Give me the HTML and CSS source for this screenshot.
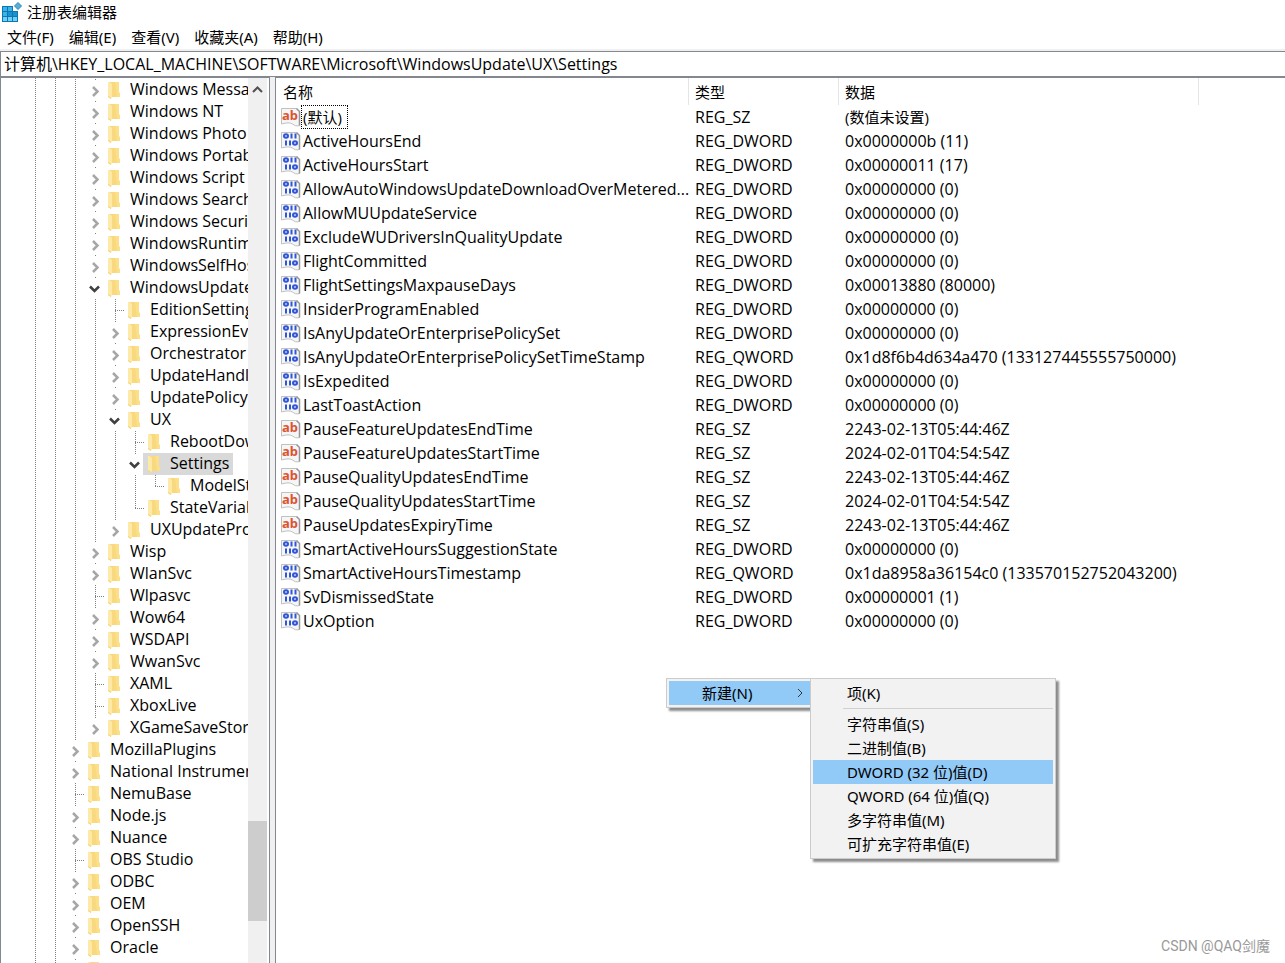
FILE: index.html
```html
<!DOCTYPE html>
<html lang="zh-CN">
<head>
<meta charset="utf-8">
<title>注册表编辑器</title>
<link rel="stylesheet" href="styles.css">
</head>
<body>
<svg class="sprite" aria-hidden="true">
  <symbol id="folder" viewBox="0 0 12 22">
    <path d="M2 3h9v10.500l1 .500v4H2z" fill="#f8d97f"/>
    <path d="M7 3h4v10.500l1 .500v4H9z" fill="#fddf87"/>
    <path d="M0 3h1.500L4 5v13l-1 2-3-2z" fill="#ffe9a6"/>
    <path d="M0 17l3 2v1l-3-2z" fill="#f3cf6c"/>
  </symbol>
  <symbol id="closed" viewBox="0 0 18 22"><path d="M8 8l4.500 4.500L8 17" fill="none" stroke="#a6a6a6" stroke-width="2.500"/></symbol>
  <symbol id="open" viewBox="0 0 18 22"><path d="M5 9.500l4.500 4.500L14 9.500" fill="none" stroke="#404040" stroke-width="2.500"/></symbol>
  <symbol id="sz" viewBox="0 0 20 20">
    <path d="M.5 1.500h15l3 3v14c-3 1-5 0-7-1.500s-6-1.500-11 0z" fill="#f6f6f6" stroke="#c0c0c0"/>
    <path d="M15.500 1.500l3 3v14" fill="none" stroke="#969696" stroke-width="1.500"/>
    <text x="1" y="13" class="glyph">ab</text>
  </symbol>
  <symbol id="bin" viewBox="0 0 20 20">
    <path d="M.5 1.500h15l3 3v14c-3 1-5 0-7-1.500s-6-1.500-11 0z" fill="#f6f6f6" stroke="#c0c0c0"/>
    <path d="M15.500 1.500l3 3v14" fill="none" stroke="#969696" stroke-width="1.500"/>
    <g fill="none" stroke="#2f55d8" stroke-width="2">
      <ellipse cx="5" cy="5" rx="2" ry="1.800"/><ellipse cx="14" cy="12" rx="2" ry="1.800"/>
      <path d="M10.500 2.500v5M14.500 2.500v5M5 9.500v5M9 9.500v5"/>
    </g>
  </symbol>
</svg>

<header class="title-bar">
  <svg class="app-icon" viewBox="0 0 20 20" aria-hidden="true">
    <path d="M0 4h11v5h5v11H0z" fill="#0f76b4"/>
    <path d="M1 5h4v4H1zM6 5h4v4H6zM1 10h4v4H1z" fill="#38b4e6"/>
    <path d="M6 10h4v4H6zM11 10h4v4h-4z" fill="#1c92cc"/>
    <path d="M1 15h4v4H1zM6 15h4v4H6zM11 15h4v4h-4z" fill="#6fd0f4"/>
    <path d="M16 .5l3.500 3.500L16 7.500 12.500 4z" fill="#58aed8" stroke="#2a86bb"/>
  </svg>
  <h1>注册表编辑器</h1>
</header>
<nav class="menu-bar">
  <button>文件(F)</button><button>编辑(E)</button><button>查看(V)</button><button>收藏夹(A)</button><button>帮助(H)</button>
</nav>
<input class="address" type="text" aria-label="地址" value="计算机\HKEY_LOCAL_MACHINE\SOFTWARE\Microsoft\WindowsUpdate\UX\Settings">

<main class="panes">
  <section class="tree-pane">
    <div class="tree">
      <ul>
        <li>
          <ul aria-label="Microsoft">
            <li><div class="row"><button class="toggle" aria-label="展开"><svg><use href="#closed"/></svg></button><span class="key"><svg><use href="#folder"/></svg>Windows Messaging Subsystem</span></div></li>
            <li><div class="row"><button class="toggle" aria-label="展开"><svg><use href="#closed"/></svg></button><span class="key"><svg><use href="#folder"/></svg>Windows NT</span></div></li>
            <li><div class="row"><button class="toggle" aria-label="展开"><svg><use href="#closed"/></svg></button><span class="key"><svg><use href="#folder"/></svg>Windows Photo Viewer</span></div></li>
            <li><div class="row"><button class="toggle" aria-label="展开"><svg><use href="#closed"/></svg></button><span class="key"><svg><use href="#folder"/></svg>Windows Portable Devices</span></div></li>
            <li><div class="row"><button class="toggle" aria-label="展开"><svg><use href="#closed"/></svg></button><span class="key"><svg><use href="#folder"/></svg>Windows Script Host</span></div></li>
            <li><div class="row"><button class="toggle" aria-label="展开"><svg><use href="#closed"/></svg></button><span class="key"><svg><use href="#folder"/></svg>Windows Search</span></div></li>
            <li><div class="row"><button class="toggle" aria-label="展开"><svg><use href="#closed"/></svg></button><span class="key"><svg><use href="#folder"/></svg>Windows Security Health</span></div></li>
            <li><div class="row"><button class="toggle" aria-label="展开"><svg><use href="#closed"/></svg></button><span class="key"><svg><use href="#folder"/></svg>WindowsRuntime</span></div></li>
            <li><div class="row"><button class="toggle" aria-label="展开"><svg><use href="#closed"/></svg></button><span class="key"><svg><use href="#folder"/></svg>WindowsSelfHost</span></div></li>
            <li><div class="row"><button class="toggle" aria-label="折叠"><svg><use href="#open"/></svg></button><span class="key"><svg><use href="#folder"/></svg>WindowsUpdate</span></div>
              <ul>
                <li><div class="row leaf"><span class="key"><svg><use href="#folder"/></svg>EditionSettings</span></div></li>
                <li><div class="row"><button class="toggle" aria-label="展开"><svg><use href="#closed"/></svg></button><span class="key"><svg><use href="#folder"/></svg>ExpressionEvaluators</span></div></li>
                <li><div class="row"><button class="toggle" aria-label="展开"><svg><use href="#closed"/></svg></button><span class="key"><svg><use href="#folder"/></svg>Orchestrator</span></div></li>
                <li><div class="row"><button class="toggle" aria-label="展开"><svg><use href="#closed"/></svg></button><span class="key"><svg><use href="#folder"/></svg>UpdateHandlers</span></div></li>
                <li><div class="row"><button class="toggle" aria-label="展开"><svg><use href="#closed"/></svg></button><span class="key"><svg><use href="#folder"/></svg>UpdatePolicy</span></div></li>
                <li><div class="row"><button class="toggle" aria-label="折叠"><svg><use href="#open"/></svg></button><span class="key"><svg><use href="#folder"/></svg>UX</span></div>
                  <ul>
                    <li><div class="row leaf"><span class="key"><svg><use href="#folder"/></svg>RebootDowntime</span></div></li>
                    <li><div class="row"><button class="toggle" aria-label="折叠"><svg><use href="#open"/></svg></button><span class="key selected"><svg><use href="#folder"/></svg>Settings</span></div>
                      <ul>
                        <li><div class="row leaf"><span class="key"><svg><use href="#folder"/></svg>ModelState</span></div></li>
                      </ul>
                    </li>
                    <li><div class="row leaf"><span class="key"><svg><use href="#folder"/></svg>StateVariables</span></div></li>
                  </ul>
                </li>
                <li><div class="row"><button class="toggle" aria-label="展开"><svg><use href="#closed"/></svg></button><span class="key"><svg><use href="#folder"/></svg>UXUpdateProvider</span></div></li>
              </ul>
            </li>
            <li><div class="row"><button class="toggle" aria-label="展开"><svg><use href="#closed"/></svg></button><span class="key"><svg><use href="#folder"/></svg>Wisp</span></div></li>
            <li><div class="row"><button class="toggle" aria-label="展开"><svg><use href="#closed"/></svg></button><span class="key"><svg><use href="#folder"/></svg>WlanSvc</span></div></li>
            <li><div class="row leaf"><span class="key"><svg><use href="#folder"/></svg>Wlpasvc</span></div></li>
            <li><div class="row"><button class="toggle" aria-label="展开"><svg><use href="#closed"/></svg></button><span class="key"><svg><use href="#folder"/></svg>Wow64</span></div></li>
            <li><div class="row"><button class="toggle" aria-label="展开"><svg><use href="#closed"/></svg></button><span class="key"><svg><use href="#folder"/></svg>WSDAPI</span></div></li>
            <li><div class="row"><button class="toggle" aria-label="展开"><svg><use href="#closed"/></svg></button><span class="key"><svg><use href="#folder"/></svg>WwanSvc</span></div></li>
            <li><div class="row leaf"><span class="key"><svg><use href="#folder"/></svg>XAML</span></div></li>
            <li><div class="row leaf"><span class="key"><svg><use href="#folder"/></svg>XboxLive</span></div></li>
            <li><div class="row"><button class="toggle" aria-label="展开"><svg><use href="#closed"/></svg></button><span class="key"><svg><use href="#folder"/></svg>XGameSaveStorage</span></div></li>
          </ul>
        </li>
        <li><div class="row"><button class="toggle" aria-label="展开"><svg><use href="#closed"/></svg></button><span class="key"><svg><use href="#folder"/></svg>MozillaPlugins</span></div></li>
        <li><div class="row"><button class="toggle" aria-label="展开"><svg><use href="#closed"/></svg></button><span class="key"><svg><use href="#folder"/></svg>National Instruments</span></div></li>
        <li><div class="row leaf"><span class="key"><svg><use href="#folder"/></svg>NemuBase</span></div></li>
        <li><div class="row"><button class="toggle" aria-label="展开"><svg><use href="#closed"/></svg></button><span class="key"><svg><use href="#folder"/></svg>Node.js</span></div></li>
        <li><div class="row"><button class="toggle" aria-label="展开"><svg><use href="#closed"/></svg></button><span class="key"><svg><use href="#folder"/></svg>Nuance</span></div></li>
        <li><div class="row leaf"><span class="key"><svg><use href="#folder"/></svg>OBS Studio</span></div></li>
        <li><div class="row"><button class="toggle" aria-label="展开"><svg><use href="#closed"/></svg></button><span class="key"><svg><use href="#folder"/></svg>ODBC</span></div></li>
        <li><div class="row"><button class="toggle" aria-label="展开"><svg><use href="#closed"/></svg></button><span class="key"><svg><use href="#folder"/></svg>OEM</span></div></li>
        <li><div class="row"><button class="toggle" aria-label="展开"><svg><use href="#closed"/></svg></button><span class="key"><svg><use href="#folder"/></svg>OpenSSH</span></div></li>
        <li><div class="row"><button class="toggle" aria-label="展开"><svg><use href="#closed"/></svg></button><span class="key"><svg><use href="#folder"/></svg>Oracle</span></div></li>
        <li><div class="row"><button class="toggle" aria-label="展开"><svg><use href="#closed"/></svg></button><span class="key"><svg><use href="#folder"/></svg></span></div></li>
      </ul>
    </div>
    <div class="scrollbar">
      <button class="scroll-up" aria-label="向上滚动"><svg viewBox="0 0 11 11"><path d="M1 8l4.500-4.500L10 8" fill="none" stroke="#505050" stroke-width="2"/></svg></button>
      <div class="track"><div class="thumb"></div></div>
    </div>
  </section>

  <section class="list-pane">
    <table>
      <colgroup><col class="col-name"><col class="col-type"><col class="col-data"><col></colgroup>
      <thead><tr><th>名称</th><th>类型</th><th>数据</th><td></td></tr></thead>
      <tbody>
        <tr><td><span class="value"><svg><use href="#sz"/></svg><span class="name focused">(默认)</span></span></td><td>REG_SZ</td><td class="unset">(数值未设置)</td></tr>
        <tr><td><span class="value"><svg><use href="#bin"/></svg><span class="name">ActiveHoursEnd</span></span></td><td>REG_DWORD</td><td>0x0000000b (11)</td></tr>
        <tr><td><span class="value"><svg><use href="#bin"/></svg><span class="name">ActiveHoursStart</span></span></td><td>REG_DWORD</td><td>0x00000011 (17)</td></tr>
        <tr><td><span class="value"><svg><use href="#bin"/></svg><span class="name">AllowAutoWindowsUpdateDownloadOverMetered...</span></span></td><td>REG_DWORD</td><td>0x00000000 (0)</td></tr>
        <tr><td><span class="value"><svg><use href="#bin"/></svg><span class="name">AllowMUUpdateService</span></span></td><td>REG_DWORD</td><td>0x00000000 (0)</td></tr>
        <tr><td><span class="value"><svg><use href="#bin"/></svg><span class="name">ExcludeWUDriversInQualityUpdate</span></span></td><td>REG_DWORD</td><td>0x00000000 (0)</td></tr>
        <tr><td><span class="value"><svg><use href="#bin"/></svg><span class="name">FlightCommitted</span></span></td><td>REG_DWORD</td><td>0x00000000 (0)</td></tr>
        <tr><td><span class="value"><svg><use href="#bin"/></svg><span class="name">FlightSettingsMaxpauseDays</span></span></td><td>REG_DWORD</td><td>0x00013880 (80000)</td></tr>
        <tr><td><span class="value"><svg><use href="#bin"/></svg><span class="name">InsiderProgramEnabled</span></span></td><td>REG_DWORD</td><td>0x00000000 (0)</td></tr>
        <tr><td><span class="value"><svg><use href="#bin"/></svg><span class="name">IsAnyUpdateOrEnterprisePolicySet</span></span></td><td>REG_DWORD</td><td>0x00000000 (0)</td></tr>
        <tr><td><span class="value"><svg><use href="#bin"/></svg><span class="name">IsAnyUpdateOrEnterprisePolicySetTimeStamp</span></span></td><td>REG_QWORD</td><td>0x1d8f6b4d634a470 (133127445555750000)</td></tr>
        <tr><td><span class="value"><svg><use href="#bin"/></svg><span class="name">IsExpedited</span></span></td><td>REG_DWORD</td><td>0x00000000 (0)</td></tr>
        <tr><td><span class="value"><svg><use href="#bin"/></svg><span class="name">LastToastAction</span></span></td><td>REG_DWORD</td><td>0x00000000 (0)</td></tr>
        <tr><td><span class="value"><svg><use href="#sz"/></svg><span class="name">PauseFeatureUpdatesEndTime</span></span></td><td>REG_SZ</td><td>2243-02-13T05:44:46Z</td></tr>
        <tr><td><span class="value"><svg><use href="#sz"/></svg><span class="name">PauseFeatureUpdatesStartTime</span></span></td><td>REG_SZ</td><td>2024-02-01T04:54:54Z</td></tr>
        <tr><td><span class="value"><svg><use href="#sz"/></svg><span class="name">PauseQualityUpdatesEndTime</span></span></td><td>REG_SZ</td><td>2243-02-13T05:44:46Z</td></tr>
        <tr><td><span class="value"><svg><use href="#sz"/></svg><span class="name">PauseQualityUpdatesStartTime</span></span></td><td>REG_SZ</td><td>2024-02-01T04:54:54Z</td></tr>
        <tr><td><span class="value"><svg><use href="#sz"/></svg><span class="name">PauseUpdatesExpiryTime</span></span></td><td>REG_SZ</td><td>2243-02-13T05:44:46Z</td></tr>
        <tr><td><span class="value"><svg><use href="#bin"/></svg><span class="name">SmartActiveHoursSuggestionState</span></span></td><td>REG_DWORD</td><td>0x00000000 (0)</td></tr>
        <tr><td><span class="value"><svg><use href="#bin"/></svg><span class="name">SmartActiveHoursTimestamp</span></span></td><td>REG_QWORD</td><td>0x1da8958a36154c0 (133570152752043200)</td></tr>
        <tr><td><span class="value"><svg><use href="#bin"/></svg><span class="name">SvDismissedState</span></span></td><td>REG_DWORD</td><td>0x00000001 (1)</td></tr>
        <tr><td><span class="value"><svg><use href="#bin"/></svg><span class="name">UxOption</span></span></td><td>REG_DWORD</td><td>0x00000000 (0)</td></tr>
      </tbody>
    </table>
  </section>
</main>

<div class="menu context">
  <button class="active">新建(N)<svg viewBox="0 0 6 10"><path d="M1 1l4 4-4 4" fill="none" stroke="#333"/></svg></button>
</div>
<div class="menu submenu">
  <button>项(K)</button>
  <hr>
  <button>字符串值(S)</button>
  <button>二进制值(B)</button>
  <button class="active">DWORD (32 位)值(D)</button>
  <button>QWORD (64 位)值(Q)</button>
  <button>多字符串值(M)</button>
  <button>可扩充字符串值(E)</button>
</div>
<div class="watermark">CSDN @QAQ剑魔</div>
</body>
</html>
```
FILE: styles.css
```css
* { box-sizing: border-box; }

body {
  position: relative;
  display: flex;
  flex-direction: column;
  height: 100vh;
  margin: 0;
  overflow: hidden;
  background: #fff;
  color: #000;
  font: 15px/22px "Noto Sans", "Noto Sans CJK SC", sans-serif;
}

button, input {
  margin: 0;
  border: 0;
  padding: 0;
  background: none;
  color: inherit;
  font: inherit;
}

svg { display: block; flex: none; }
.sprite { position: absolute; width: 0; height: 0; }
.glyph { font: bold 13px "Noto Sans", sans-serif; fill: #dc5330; }

.title-bar {
  display: flex;
  align-items: center;
  gap: 5px;
  height: 23px;
  flex: none;
  padding-left: 2px;
}
.title-bar h1 { margin: 0; font-size: 15px; font-weight: 400; }
.app-icon { width: 20px; height: 20px; }

.menu-bar {
  display: flex;
  gap: 1px;
  flex: none;
  height: 28px;
  border-bottom: 2px solid #f0f0f0;
}
.menu-bar button { padding: 2px 7px 0; }

.address {
  flex: none;
  width: 100%;
  height: 26px;
  padding: 0 3px 2px;
  border: 1px solid #828790;
  border-right: 0;
  font: 16px/22px "Open Sans", "Noto Sans CJK SC", sans-serif;
}

.panes {
  display: flex;
  gap: 5px;
  flex: 1;
  min-height: 0;
  background: #f0f0f0;
  font: 16px/22px "Open Sans", "Noto Sans CJK SC", sans-serif;
}

.tree-pane {
  display: flex;
  flex: none;
  width: 270px;
  border: 1px solid #828790;
  border-bottom: 0;
  background: #fff;
}
.tree {
  flex: 1;
  min-width: 0;
  overflow: hidden;
  padding: 1px 0 0 64px;
  background:
    repeating-linear-gradient(#808080 0 1px, transparent 1px 2px) 34px 0 / 1px 100% no-repeat,
    repeating-linear-gradient(#808080 0 1px, transparent 1px 2px) 54px 0 / 1px 100% no-repeat;
}
.tree ul { margin: 0; padding: 0; list-style: none; }
.tree ul ul { padding-left: 20px; }
.tree li {
  background: repeating-linear-gradient(#808080 0 1px, transparent 1px 2px) 10px 0 / 1px 100% no-repeat;
}
.tree li li:last-child { background-size: 1px 12px; }
.row { display: flex; height: 22px; line-height: 21px; white-space: nowrap; }
.toggle { width: 18px; height: 20px; margin-top: 1px; background: #fff; flex: none; }
.toggle svg { width: 18px; height: 22px; margin-top: -1px; }
.leaf { padding-left: 18px; background: repeating-linear-gradient(90deg, #808080 0 1px, transparent 1px 2px) 10px 11px / 10px 1px no-repeat; }
.key { display: flex; gap: 10px; padding: 0 4px 0 5px; }
.key svg { width: 12px; height: 22px; }
.selected { background: #d9d9d9; }

.scrollbar { display: flex; flex-direction: column; flex: none; width: 21px; background: #f0f0f0; border-right: 2px solid #fff; }
.scroll-up { display: flex; align-items: center; justify-content: center; height: 22px; }
.scroll-up svg { width: 11px; height: 11px; }
.track { display: flex; flex-direction: column; justify-content: flex-end; flex: 1; padding-bottom: 42px; }
.thumb { height: 100px; background: #cdcdcd; }

.list-pane {
  flex: 1;
  min-width: 0;
  overflow: hidden;
  border-top: 1px solid #828790;
  border-left: 1px solid #828790;
  background: #fff;
}

table { width: 100%; table-layout: fixed; border-spacing: 0; white-space: nowrap; }
.col-name { width: 413px; }
.col-type { width: 150px; }
.col-data { width: 360px; }
th { height: 27px; padding: 0 0 0 6px; border-right: 1px solid #e5e5e5; font-size: 15px; text-align: left; font-weight: 400; }
th:first-child { padding-left: 7px; }
tbody td { height: 24px; padding: 0 0 0 6px; }
tbody td:first-child { padding-left: 5px; }
.value { display: flex; align-items: center; }
.value svg { width: 20px; height: 20px; }
.name { padding: 0 0 0 1px; border: 1px solid transparent; }
.focused { padding-right: 5px; border: 1px dotted #000; }
.focused, tbody .unset { font-size: 15px; }

.menu {
  position: absolute;
  display: flex;
  flex-direction: column;
  padding: 2px;
  border: 1px solid #ccc;
  background: #f2f2f2;
  box-shadow: 3px 3px 2px rgba(0, 0, 0, .45);
}
.menu button { display: flex; align-items: center; height: 24px; padding-left: 34px; text-align: left; }
.menu .active { background: #91c9f7; }
.menu hr { width: 210px; margin: 3px 0 3px auto; border: 0; border-top: 1px solid #d0d0d0; }
.context { left: 666px; top: 678px; width: 148px; }
.context button { justify-content: space-between; padding-left: 33px; padding-right: 8px; }
.context svg { width: 6px; height: 10px; }
.submenu { left: 810px; top: 678px; width: 246px; }

.watermark { position: absolute; right: 15px; bottom: 6px; color: #999; font: 14px/22px Roboto, "Noto Sans CJK SC", sans-serif; }
```
